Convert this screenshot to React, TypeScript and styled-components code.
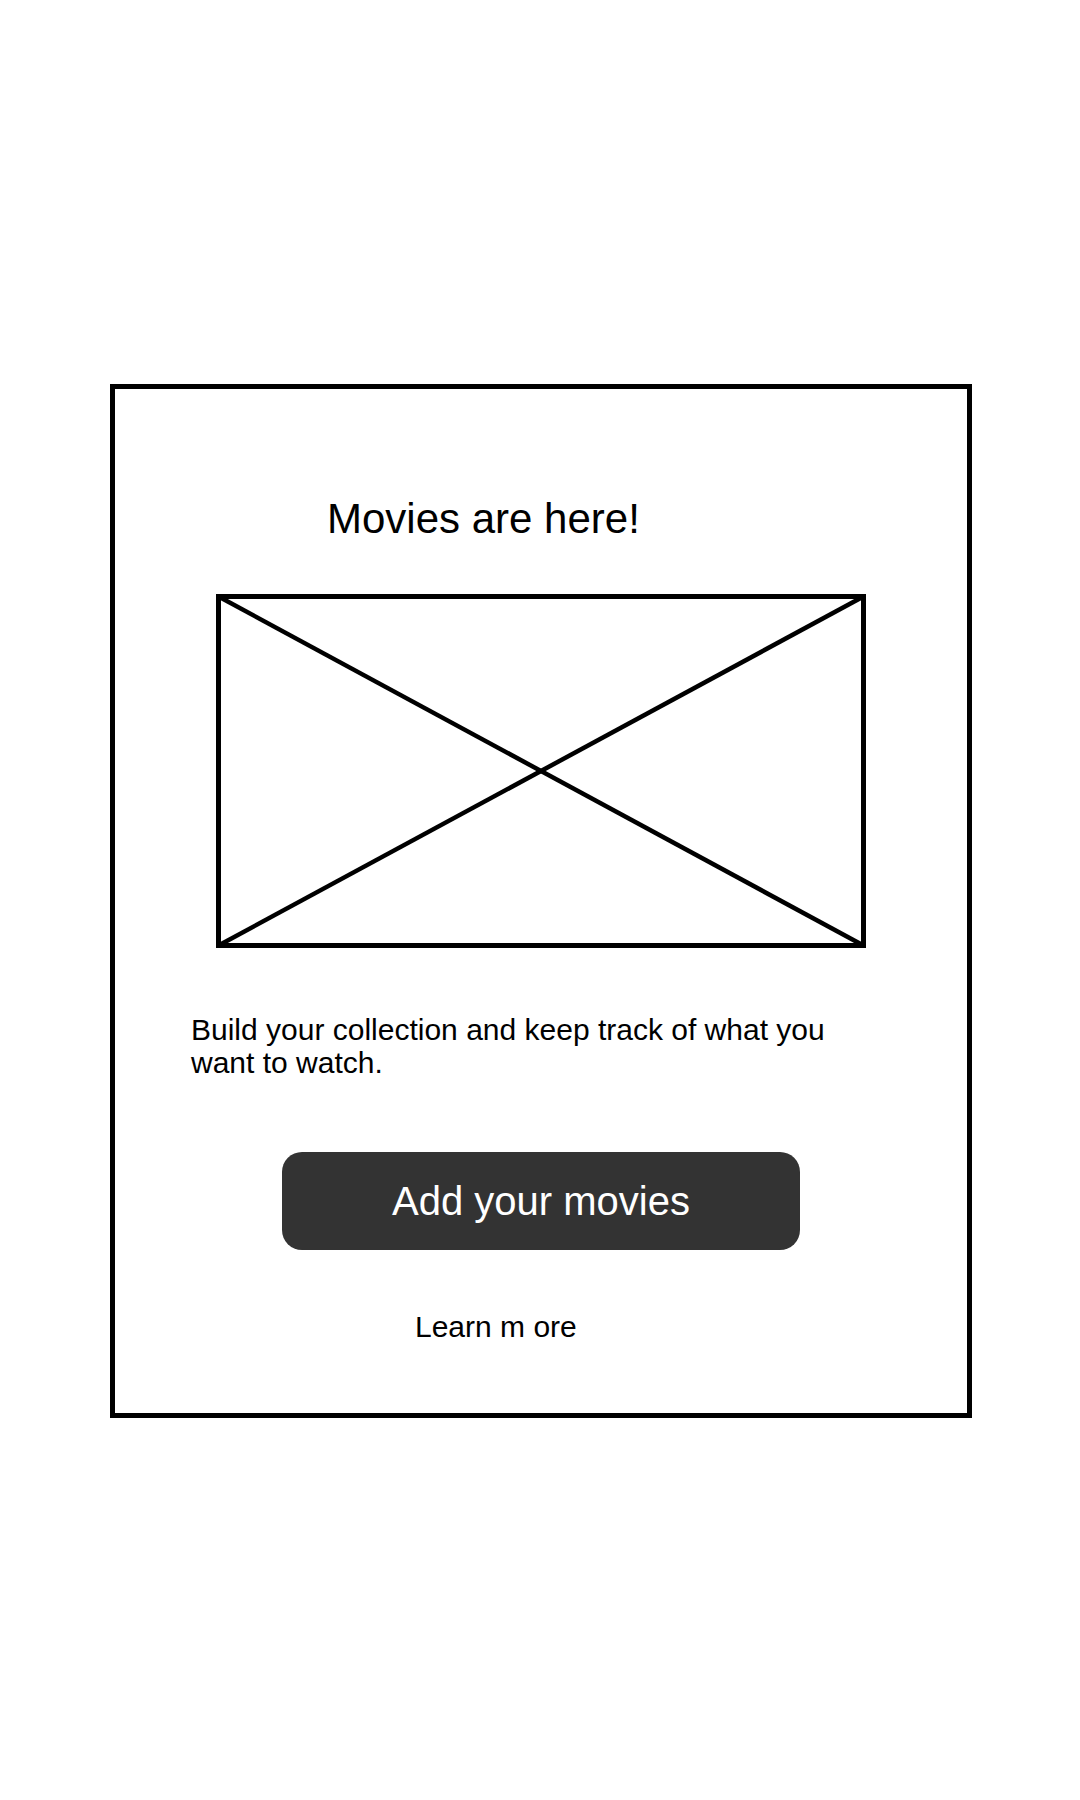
import * as React from "react";
import styled, { createGlobalStyle } from "styled-components";

const GlobalStyle = createGlobalStyle`
  html, body {
    margin: 0;
    padding: 0;
    background: #ffffff;
  }
  body {
    font-family: "Liberation Sans", Arial, sans-serif;
    color: #000;
  }
`;

const Page = styled.div`
  width: 1080px;
  min-height: 1800px;
  padding-top: 384px;
  padding-left: 110px;
  box-sizing: border-box;
`;

const Card = styled.div`
  width: 862px;
  height: 1034px;
  box-sizing: border-box;
  border: 5px solid #000;
  display: flex;
  flex-direction: column;
  align-items: flex-start;
`;

const Title = styled.h1<{ $indent: number }>`
  margin: 109px 0 0 ${(p) => p.$indent}px;
  font-size: 42px;
  line-height: 42px;
  font-weight: 400;
`;

const Placeholder = styled.div<{ $indent: number }>`
  margin: 54px 0 0 ${(p) => p.$indent}px;
  width: 650px;
  height: 354px;
  svg {
    display: block;
  }
`;

const Blurb = styled.p<{ $indent: number }>`
  margin: 65px 0 0 ${(p) => p.$indent}px;
  max-width: 670px;
  font-size: 30px;
  line-height: 33px;
`;

const PrimaryButton = styled.button<{ $indent: number }>`
  margin: 73px 0 0 ${(p) => p.$indent}px;
  width: 518px;
  height: 98px;
  border: none;
  border-radius: 20px;
  background: #333333;
  color: #ffffff;
  font-family: "Liberation Sans", Arial, sans-serif;
  font-size: 40px;
  display: flex;
  align-items: center;
  justify-content: center;
  padding: 0;
  cursor: pointer;
`;

const LinkText = styled.a<{ $indent: number }>`
  margin: 60px 0 0 ${(p) => p.$indent}px;
  font-size: 30px;
  line-height: 33px;
  color: #000;
  text-decoration: none;
`;

const ImageMark = () => (
  <svg width="650" height="354" viewBox="0 0 650 354">
    <rect x="2.5" y="2.5" width="645" height="349" fill="none" stroke="#000" strokeWidth="5" />
    <line x1="2.5" y1="2.5" x2="647.5" y2="351.5" stroke="#000" strokeWidth="4.5" />
    <line x1="647.5" y1="2.5" x2="2.5" y2="351.5" stroke="#000" strokeWidth="4.5" />
  </svg>
);

export default function App() {
  return (
    <>
      <GlobalStyle />
      <Page>
        <Card>
          <Title $indent={212}>Movies are here!</Title>
          <Placeholder $indent={101}>
            <ImageMark />
          </Placeholder>
          <Blurb $indent={76}>
            Build your collection and keep track of what you want to watch.
          </Blurb>
          <PrimaryButton $indent={167}>Add your movies</PrimaryButton>
          <LinkText $indent={300}>Learn m ore</LinkText>
        </Card>
      </Page>
    </>
  );
}
